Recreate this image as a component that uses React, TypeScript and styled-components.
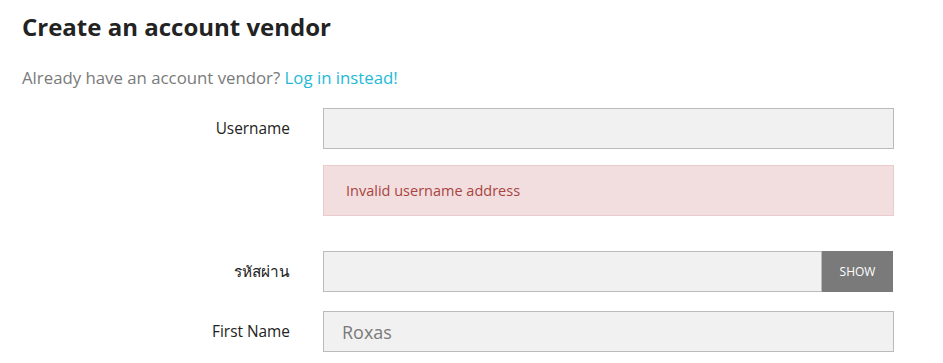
import React from "react";
import styled, { createGlobalStyle } from "styled-components";

const GlobalStyle = createGlobalStyle`
  body {
    margin: 0;
    background: #fff;
    font-family: "Open Sans", "Noto Sans", sans-serif;
  }
`;

const Page = styled.div`
  padding: 12px 0 0 22px;
`;

const Title = styled.h1`
  margin: 0;
  font-size: 24px;
  line-height: 30px;
  font-weight: 700;
  color: #232323;
`;

const Intro = styled.p`
  margin: 23.5px 0 18.5px;
  font-size: 16.8px;
  line-height: 24px;
  color: #7a7a7a;

  a {
    color: #24b9d7;
    text-decoration: none;
  }
`;

const Row = styled.div<{ $gap?: number }>`
  display: grid;
  grid-template-columns: 268px 571px;
  column-gap: 33px;
  align-items: center;
  margin-bottom: ${(p) => p.$gap ?? 19}px;
`;

const Label = styled.label`
  text-align: right;
  font-size: 15.4px;
  color: #232323;
`;

const Field = styled.div`
  display: flex;
  height: 41px;
`;

const Input = styled.input`
  flex: 1;
  min-width: 0;
  box-sizing: border-box;
  height: 41px;
  margin: 0;
  padding: 0 18px;
  border: 1px solid #bbbbbb;
  background: #f1f1f1;
  font-family: inherit;
  font-size: 18px;
  color: #7a7a7a;
  outline: none;
`;

const ShowButton = styled.button`
  width: 71px;
  height: 41px;
  margin: 0 1px 0 0;
  border: none;
  background: #7a7a7a;
  color: #fff;
  font-family: inherit;
  font-size: 12px;
  text-transform: uppercase;
`;

const Alert = styled.div`
  box-sizing: border-box;
  height: 51px;
  display: flex;
  align-items: center;
  padding-left: 22px;
  background: #f2dede;
  border: 1px solid #ebcccc;
  color: #a94442;
  font-size: 14.5px;
`;

const App = () => (
  <Page>
    <GlobalStyle />
    <Title>Create an account vendor</Title>
    <Intro>
      Already have an account vendor? <a href="#">Log in instead!</a>
    </Intro>
    <Row $gap={16}>
      <Label>Username</Label>
      <Field>
        <Input />
      </Field>
    </Row>
    <Row $gap={35}>
      <span />
      <Alert>Invalid username address</Alert>
    </Row>
    <Row>
      <Label>รหัสผ่าน</Label>
      <Field>
        <Input type="password" />
        <ShowButton>Show</ShowButton>
      </Field>
    </Row>
    <Row>
      <Label>First Name</Label>
      <Field>
        <Input defaultValue="Roxas" />
      </Field>
    </Row>
  </Page>
);

export default App;
